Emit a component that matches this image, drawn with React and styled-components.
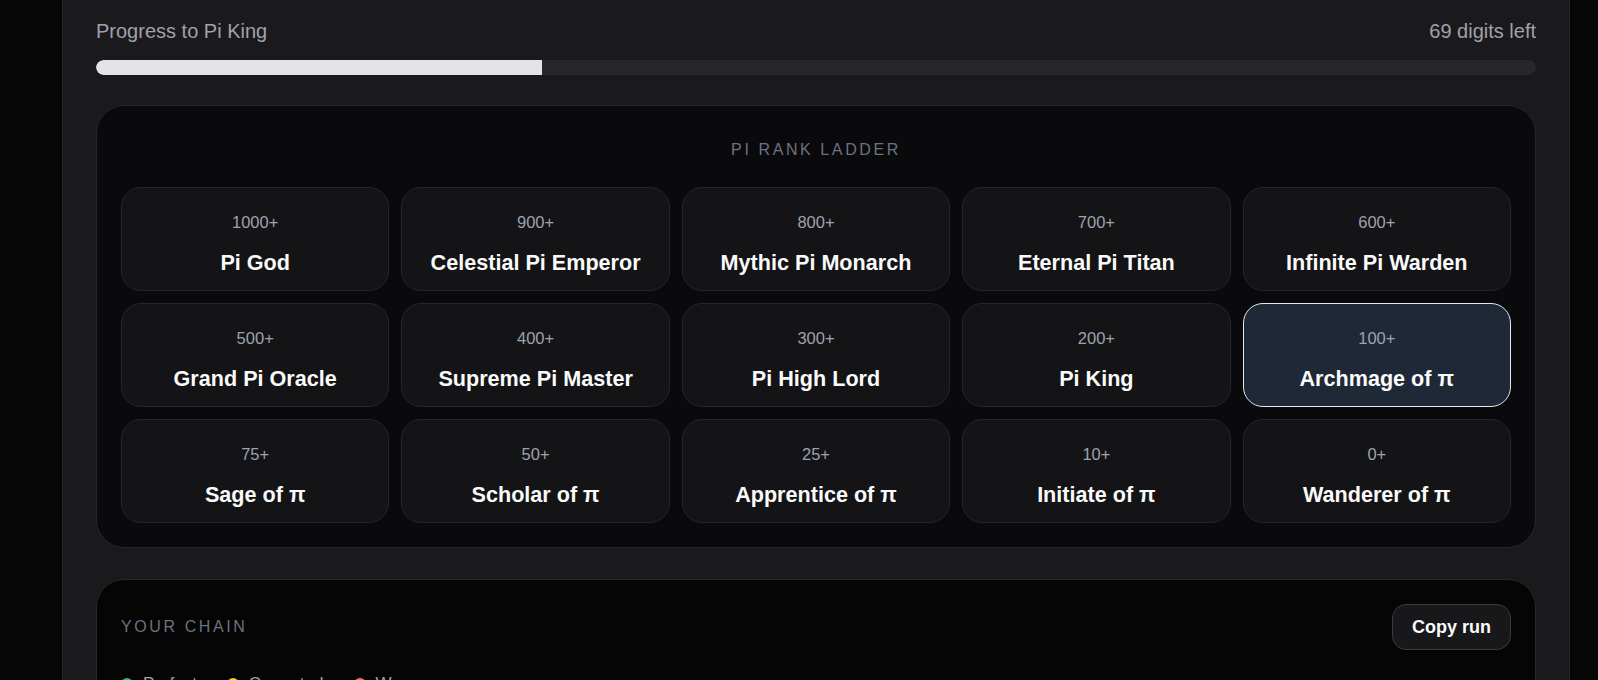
import React from 'react'
import styled, { createGlobalStyle } from 'styled-components'

const ranks = [
  { min: '1000+', name: 'Pi God' },
  { min: '900+', name: 'Celestial Pi Emperor' },
  { min: '800+', name: 'Mythic Pi Monarch' },
  { min: '700+', name: 'Eternal Pi Titan' },
  { min: '600+', name: 'Infinite Pi Warden' },
  { min: '500+', name: 'Grand Pi Oracle' },
  { min: '400+', name: 'Supreme Pi Master' },
  { min: '300+', name: 'Pi High Lord' },
  { min: '200+', name: 'Pi King' },
  { min: '100+', name: 'Archmage of π', current: true },
  { min: '75+', name: 'Sage of π' },
  { min: '50+', name: 'Scholar of π' },
  { min: '25+', name: 'Apprentice of π' },
  { min: '10+', name: 'Initiate of π' },
  { min: '0+', name: 'Wanderer of π' },
]

const legend = [
  { label: 'Perfect', color: '#22c55e' },
  { label: 'Corrected', color: '#facc15' },
  { label: 'Wrong', color: '#f87171' },
]

// digits into the current tier, out of 100
const progress = 31

export default function App() {
  return (
    <>
      <GlobalStyle />
      <Panel>
        <ProgressHead>
          <span>Progress to Pi King</span>
          <span>69 digits left</span>
        </ProgressHead>
        <Track>
          <Fill style={{ width: `${progress}%` }} />
        </Track>

        <LadderCard>
          <SectionLabel $center>Pi Rank Ladder</SectionLabel>
          <RankGrid>
            {ranks.map((r) => (
              <RankTile key={r.name} $current={r.current}>
                <RankMin>{r.min}</RankMin>
                <RankName>{r.name}</RankName>
              </RankTile>
            ))}
          </RankGrid>
        </LadderCard>

        <ChainCard>
          <ChainHead>
            <SectionLabel>Your Chain</SectionLabel>
            <CopyButton>Copy run</CopyButton>
          </ChainHead>
          <Legend>
            {legend.map((l) => (
              <LegendItem key={l.label}>
                <Dot $color={l.color} />
                {l.label}
              </LegendItem>
            ))}
          </Legend>
        </ChainCard>
      </Panel>
    </>
  )
}

const GlobalStyle = createGlobalStyle`
  html, body {
    margin: 0;
    background: #070707;
    font-family: "Liberation Sans", Arial, sans-serif;
    overflow: hidden;
  }
  * { box-sizing: border-box; }
`

const Panel = styled.div`
  margin-left: 62px;
  width: 1508px;
  min-height: 720px;
  background: #1a1a1c;
  border-left: 1px solid #262629;
  border-right: 1px solid #262629;
  padding: 17px 33px 0;
`

const ProgressHead = styled.div`
  display: flex;
  justify-content: space-between;
  align-items: center;
  height: 28px;
  font-size: 20px;
  color: #a1a1aa;
`

const Track = styled.div`
  margin-top: 15px;
  height: 15px;
  border-radius: 999px;
  background: #27272a;
  overflow: hidden;
`

const Fill = styled.div`
  height: 100%;
  background: #e4e4e7;
  border-radius: 999px 0 0 999px;
`

const LadderCard = styled.section`
  margin-top: 30px;
  background: #0a0a0c;
  border: 1px solid #27272a;
  border-radius: 28px;
  padding: 32px 24px 24px;
`

const SectionLabel = styled.div`
  font-size: 16px;
  line-height: 24px;
  letter-spacing: 2.6px;
  text-transform: uppercase;
  color: #6b7280;
  text-align: ${(p) => (p.$center ? 'center' : 'left')};
`

const RankGrid = styled.div`
  margin-top: 25px;
  display: grid;
  grid-template-columns: repeat(5, 1fr);
  gap: 12px;
`

const RankTile = styled.div`
  height: 104px;
  display: flex;
  flex-direction: column;
  align-items: center;
  padding-top: 24px;
  border-radius: 20px;
  border: 1px solid ${(p) => (p.$current ? '#e5e7eb' : '#26262a')};
  background: ${(p) => (p.$current ? '#1f2837' : '#141416')};
`

const RankMin = styled.div`
  font-size: 16.5px;
  line-height: 20px;
  color: #9ca3af;
`

const RankName = styled.div`
  margin-top: 17px;
  font-size: 21.6px;
  line-height: 28px;
  font-weight: 700;
  color: #fafafa;
`

const ChainCard = styled.section`
  margin-top: 31px;
  background: #050505;
  border: 1px solid #27272a;
  border-radius: 28px;
  padding: 24px;
  min-height: 200px;
`

const ChainHead = styled.div`
  display: flex;
  justify-content: space-between;
  align-items: center;
`

const CopyButton = styled.button`
  height: 46px;
  padding: 0 19px;
  border-radius: 14px;
  border: 1px solid #3a3a3f;
  background: #18181b;
  color: #fafafa;
  font-family: inherit;
  font-size: 18px;
  font-weight: 700;
  cursor: pointer;
`

const Legend = styled.div`
  margin-top: 22px;
  display: flex;
  gap: 30px;
  font-size: 17px;
  line-height: 24px;
  color: #a1a1aa;
`

const LegendItem = styled.div`
  display: flex;
  align-items: center;
  gap: 10px;
`

const Dot = styled.span`
  width: 12px;
  height: 12px;
  border-radius: 50%;
  background: ${(p) => p.$color};
`
